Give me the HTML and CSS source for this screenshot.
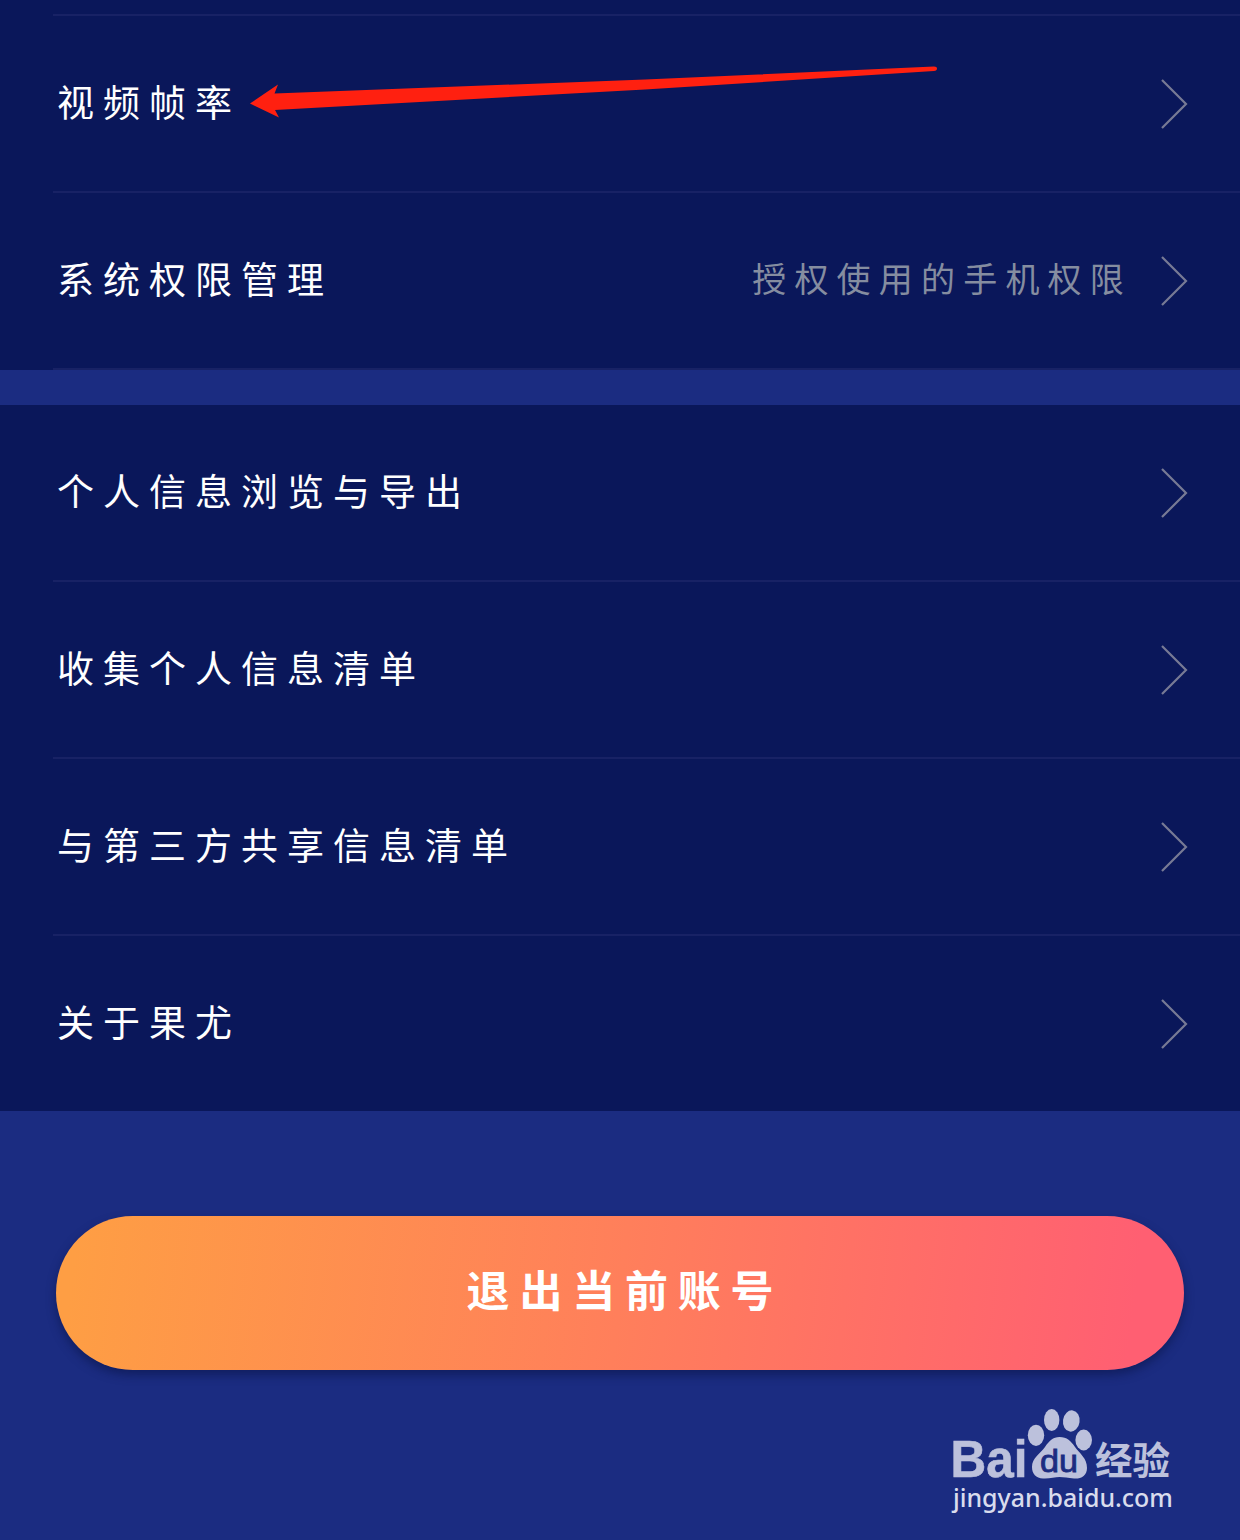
FILE: index.html
```
<!DOCTYPE html>
<html lang="zh-CN">
<head>
    <meta charset="UTF-8">
    <title>设置</title>
    <link rel="stylesheet" href="styles.css">
</head>
<body>
    <div class="page">
        <ul class="group first">
            <li>
                <span class="name">视频帧率</span>
                <svg class="more" viewBox="0 0 28 52"><path d="M2 2L26 26L2 50"/></svg>
            </li>
            <li>
                <span class="name">系统权限管理</span>
                <span class="value">授权使用的手机权限</span>
                <svg class="more" viewBox="0 0 28 52"><path d="M2 2L26 26L2 50"/></svg>
            </li>
        </ul>
        <ul class="group">
            <li>
                <span class="name">个人信息浏览与导出</span>
                <svg class="more" viewBox="0 0 28 52"><path d="M2 2L26 26L2 50"/></svg>
            </li>
            <li>
                <span class="name">收集个人信息清单</span>
                <svg class="more" viewBox="0 0 28 52"><path d="M2 2L26 26L2 50"/></svg>
            </li>
            <li>
                <span class="name">与第三方共享信息清单</span>
                <svg class="more" viewBox="0 0 28 52"><path d="M2 2L26 26L2 50"/></svg>
            </li>
            <li class="last">
                <span class="name">关于果尤</span>
                <svg class="more" viewBox="0 0 28 52"><path d="M2 2L26 26L2 50"/></svg>
            </li>
        </ul>
        <div class="bottom">
            <button class="logout" type="button">退出当前账号</button>
        </div>

        <!-- 红色箭头 -->
        <svg class="arrow" viewBox="0 0 700 60">
            <path d="M5 43.5L33 24.5L29.5 33.5L400 19.5L689 6.5Q692 6.5 692 8.5Q692 10.5 689 11L400 29.5L30 50L34 57.5Z"/>
        </svg>

        <!-- 水印 -->
        <svg class="mark" viewBox="0 0 240 120">
            <g class="logo">
                <text class="bai" x="10.5" y="76.5" textLength="77" lengthAdjust="spacingAndGlyphs">Bai</text>
                <ellipse cx="96" cy="35.3" rx="8.2" ry="10.6"/>
                <ellipse cx="111.7" cy="20" rx="7.7" ry="11"/>
                <ellipse cx="131.3" cy="21" rx="8.3" ry="10.7" transform="rotate(8 131.3 21)"/>
                <ellipse cx="143.7" cy="40" rx="8.3" ry="10.4"/>
                <path d="M119.500 37C127 37 131 41 135 47C140 54 147 58 147 68C147 76 141 79 134 78.500C128 78 124 77 119.500 77C115 77 109 79 103 78.500C96 78 92 74 92 67C92 58 100 54 105 47C109 41 113 37 119.500 37Z"/>
                <text class="du" x="100" y="71.500" textLength="38" lengthAdjust="spacingAndGlyphs">du</text>
                <text class="jy" x="155" y="74" textLength="75" lengthAdjust="spacingAndGlyphs">经验</text>
            </g>
            <text class="url" x="13" y="107" textLength="220" lengthAdjust="spacingAndGlyphs">jingyan.baidu.com</text>
        </svg>
    </div>
</body>
</html>
```
FILE: styles.css
```
*{
    margin: 0;
    padding: 0;
    box-sizing: border-box;
}
ul{
    list-style: none;
}
body{
    background: #1b2c81;
    font-family: "Liberation Sans","Noto Sans CJK SC",sans-serif;
}
.page{
    position: relative;
    width: 1240px;
    height: 1540px;
    overflow: hidden;
}
.group{
    background: #0a175a;
    padding-left: 53px;
    margin-bottom: 35px;
}
.group li{
    display: flex;
    align-items: center;
    height: 177px;
    padding: 0 52px 0 4px;
    border-bottom: 2px solid #182265;
}
.group li.last{
    height: 175px;
    border-bottom: none;
}
/*最上面露出一条分割线*/
.first::before{
    content: "";
    display: block;
    height: 14px;
    border-bottom: 2px solid #182265;
}
.group:not(.first){
    height: 706px;
    margin-bottom: 0;
}
.name,.value{
    font-family: "Noto Sans CJK SC",sans-serif;
    font-weight: 400;
    white-space: nowrap;
    line-height: 60px;
    padding-bottom: 6px;
}
.name{
    color: #fff;
    font-size: 37px;
    letter-spacing: 9px;
}
.value{
    margin-left: auto;
    margin-right: 28px;
    color: #858da0;
    font-size: 34px;
    letter-spacing: 8.2px;
}
.more{
    width: 28px;
    height: 52px;
    margin-left: auto;
    flex: none;
}
.value + .more{
    margin-left: 0;
}
.more path{
    fill: none;
    stroke: #777a95;
    stroke-width: 2.2;
}
.bottom{
    padding: 105px 56px 0;
}
.logout{
    display: block;
    width: 100%;
    height: 154px;
    border: none;
    border-radius: 77px;
    background: linear-gradient(97deg, #fe9e44 2%, #ff7f5b 50%, #ff5f72 95%);
    box-shadow: 0 5px 10px rgba(10,20,70,.55);
    color: #fff;
    font-family: "Noto Sans CJK SC",sans-serif;
    font-size: 43px;
    font-weight: bold;
    letter-spacing: 9.8px;
    text-indent: 10px;
    padding-bottom: 10px;
}
.arrow{
    position: absolute;
    left: 245px;
    top: 60px;
    width: 700px;
    height: 60px;
    fill: #ff2010;
}
.mark{
    position: absolute;
    left: 940px;
    top: 1400px;
    width: 240px;
    height: 120px;
}
.logo{
    fill: #bcc1dc;
}
.bai{
    font: bold 51px "Liberation Sans",sans-serif;
    stroke: #bcc1dc;
    stroke-width: .6;
}
.du{
    fill: #1b2c81;
    stroke: #1b2c81;
    stroke-width: .8;
    font: 31px "Liberation Sans",sans-serif;
}
.jy{
    font: bold 38px "Noto Sans CJK SC",sans-serif;
}
.url{
    fill: #d9dced;
    font: 500 25px "Noto Sans",sans-serif;
}
```
